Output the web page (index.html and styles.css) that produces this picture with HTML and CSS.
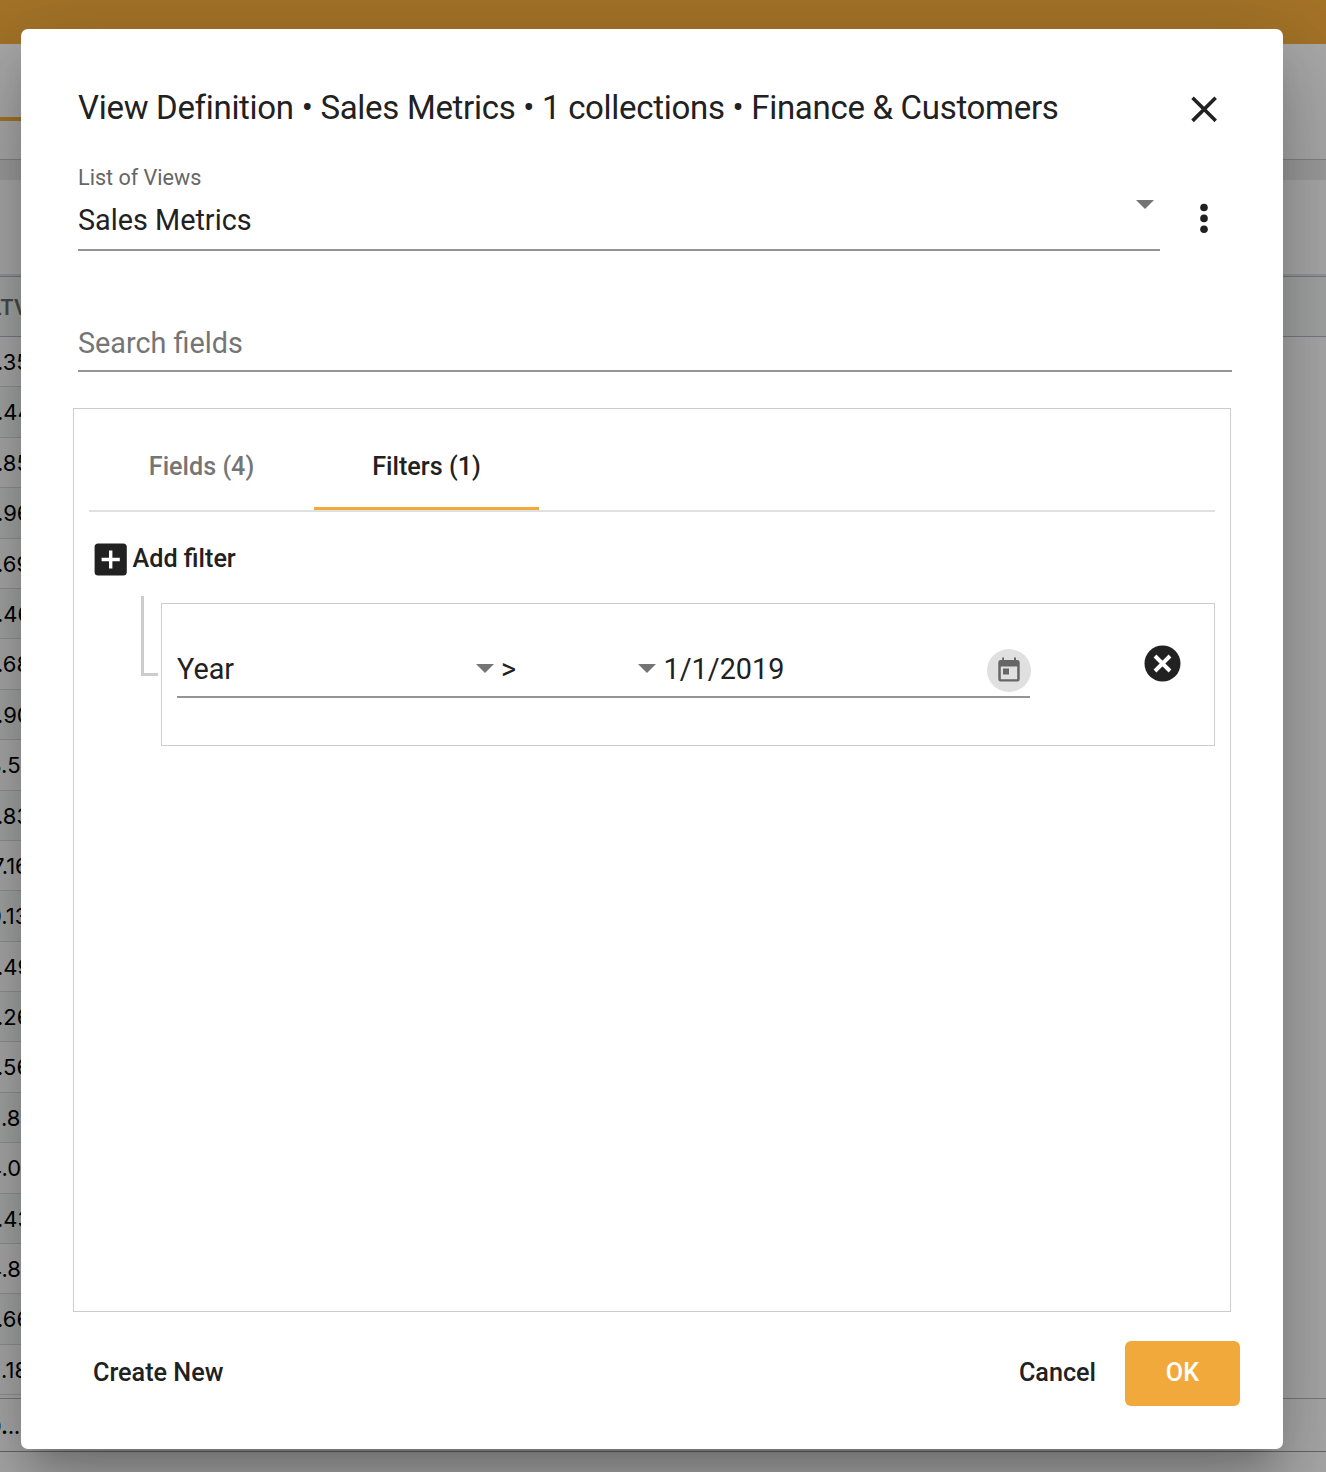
FILE: index.html
```html
<!DOCTYPE html>
<html lang="en">
<head>
<meta charset="utf-8">
<title>View Definition</title>
<link rel="stylesheet" href="styles.css">
</head>
<body>
<div class="page">
  <div class="topbar"></div>
  <div class="tabstrip"><div class="tabstrip-active"></div></div>
  <div class="divider"></div>
  <div class="toolbar"></div>
  <div class="grid-head">LTV</div>
  <div class="grid-body">
    <div class="row">.35</div>
    <div class="row">.44</div>
    <div class="row">.85</div>
    <div class="row">.96</div>
    <div class="row">.69</div>
    <div class="row">.46</div>
    <div class="row">.68</div>
    <div class="row">.90</div>
    <div class="row lead">8.5</div>
    <div class="row">.83</div>
    <div class="row lead seven">7.16</div>
    <div class="row lead">0.13</div>
    <div class="row">.49</div>
    <div class="row">.26</div>
    <div class="row">.56</div>
    <div class="row short">.8</div>
    <div class="row lead">4.0</div>
    <div class="row">.43</div>
    <div class="row lead">4.8</div>
    <div class="row">.66</div>
    <div class="row short">.18</div>
  </div>
  <div class="grid-foot">0.<span class="dots">....</span></div>
</div>

<div class="overlay">
  <section class="dialog" role="dialog" aria-modal="true">
    <header class="dialog-head">
      <h1 class="title">View Definition • Sales Metrics • 1 collections • Finance &amp; Customers</h1>
      <svg class="icon-close" viewBox="0 0 50 50"><path d="M14.8 15 35.4 35.6M35.4 15 14.8 35.6" stroke="#212121" stroke-width="3.6" stroke-linecap="square" fill="none"/></svg>
    </header>

    <div class="views">
      <div class="select">
        <div class="label">List of Views</div>
        <div class="select-value"><span>Sales Metrics</span><i class="caret"></i></div>
      </div>
      <svg class="icon-more" viewBox="0 0 44 44"><g fill="#212121"><circle cx="22" cy="11.5" r="3.8"/><circle cx="22" cy="22.4" r="3.8"/><circle cx="22" cy="33.2" r="3.8"/></g></svg>
    </div>

    <div class="search">Search fields</div>

    <div class="panel">
      <nav class="tabs">
        <div class="tab">Fields (4)</div>
        <div class="tab active">Filters (1)</div>
      </nav>
      <div class="add">
        <svg class="icon-add" viewBox="0 0 33 33"><rect x=".6" y=".4" width="32.2" height="32.2" rx="3.6" fill="#212121"/><path d="M16.7 7.4V25.6M7.6 16.5H25.8" stroke="#fff" stroke-width="3.4"/></svg>
        <span>Add filter</span>
      </div>
      <div class="filter">
        <div class="branch"></div>
        <div class="card">
          <div class="condition">
            <div class="field-name"><span>Year</span><i class="caret"></i></div>
            <div class="field-op"><span class="op">&gt;</span><i class="caret"></i></div>
            <div class="field-date">1/1/2019</div>
            <div class="date-button">
              <svg viewBox="0 0 22 25" width="22" height="25"><path fill="#666" fill-rule="evenodd" d="M4.2 0.5H6V3H16V.5H18V3H19.3Q21.7 3 21.7 5.4V22.2Q21.7 24.6 19.3 24.6H2.7Q.3 24.6.3 22.2V5.4Q.3 3 2.7 3H4.2ZM2.8 9.4V22.2H19.2V9.4ZM5 11.6H11V17.6H5Z"/></svg>
            </div>
          </div>
          <svg class="icon-remove" viewBox="0 0 37 37"><circle cx="18.5" cy="18.5" r="18" fill="#212121"/><path d="M11 11 26 26M26 11 11 26" stroke="#fff" stroke-width="3.9" stroke-linecap="butt"/></svg>
        </div>
      </div>
    </div>

    <footer class="actions">
      <div class="btn-text">Create New</div>
      <div class="btn-text cancel">Cancel</div>
      <div class="btn-ok">OK</div>
    </footer>
  </section>
</div>
</body>
</html>
```
FILE: styles.css
```css
* { box-sizing: border-box; }
body {
  margin: 0;
  width: 1326px;
  height: 1472px;
  overflow: hidden;
  position: relative;
  font-family: Roboto, "Liberation Sans", sans-serif;
  color: #212121;
}

/* Underlying page */
.page { height: 1472px; background: #fafafa; font-family: Inter, sans-serif; }
.topbar { height: 44px; background: #f2aa3b; }
.tabstrip { height: 116px; padding-top: 73px; border-bottom: 1px solid #c2c2c2; }
.tabstrip-active { width: 60px; height: 4px; background: #f2aa3b; }
.divider { height: 20px; background: #e6e6e6; }
.toolbar { height: 96px; border-bottom: 2px solid #ddd; box-shadow: 0 1px #b3b6bd; }
.grid-head {
  height: 60px;
  margin-top: 1px;
  border-bottom: 1px solid #b3b6bd;
  background: #f0f4f2;
  font-size: 21px;
  line-height: 61px;
  text-indent: -10px;
  color: #6c6e6d;
  font-weight: 600;
}
.grid-body { width: 1200px; height: 1058.4px; }
.row {
  height: 50.4px;
  border-bottom: 1px solid #d5d8d7;
  font-size: 22px;
  line-height: 51px;
  text-indent: -3px;
  color: #000;
}
.row:nth-child(even) { background: #f0f4f2; }
.row.lead { text-indent: -12px; }
.row.seven { text-indent: -8px; }
.row.short { text-indent: 1px; }
.grid-foot {
  height: 54px;
  margin-top: 3px;
  border-top: 1px solid #b4b4b4;
  border-bottom: 1px solid #999;
  font-size: 22px;
  font-weight: 600;
  line-height: 55px;
  text-indent: -13px;
  color: #000;
}
.dots { font-size: 19px; }

/* Dialog */
.overlay {
  position: absolute;
  inset: 0;
  padding: 29px 43px 23px 21px;
  background: rgba(0, 0, 0, .32);
}
.dialog {
  height: 1420px;
  padding: 55px 43px 0 52px;
  border-radius: 7px;
  background: #fff;
  box-shadow: 0 22px 30px -14px rgba(0, 0, 0, .2), 0 48px 76px 6px rgba(0, 0, 0, .14), 0 18px 92px 16px rgba(0, 0, 0, .12);
}
.dialog-head {
  display: flex;
  justify-content: space-between;
  height: 77px;
  padding: 0 11px 0 5px;
}
.title {
  margin: 0;
  font-size: 33px;
  font-weight: 400;
  line-height: 48px;
  letter-spacing: -.3px;
  white-space: nowrap;
}
.icon-close { width: 50px; height: 50px; }

.views { display: flex; height: 90px; padding-left: 5px; }
.select { width: 1082px; border-bottom: 2px solid #949494; }
.label { font-size: 21.6px; line-height: 34px; color: #666; }
.select-value { display: flex; justify-content: space-between; padding-right: 6px; font-size: 28.8px; line-height: 51px; }
.caret { width: 18px; height: 9px; background: #757575; clip-path: polygon(0 0, 100% 0, 50% 100%); }
.select .caret { margin-top: 5px; }
.icon-more { width: 44px; height: 44px; margin: 35px 0 0 22px; }

.search {
  width: 1154px;
  height: 121px;
  margin-left: 5px;
  padding-top: 63px;
  border-bottom: 2px solid #949494;
  font-size: 28.8px;
  line-height: 58px;
  color: #757575;
}

.panel {
  width: 1158px;
  height: 904px;
  margin-top: 36px;
  padding: 15px;
  border: 1px solid #ccc;
}
.tabs { display: flex; height: 88px; border-bottom: 2px solid #e0e0e0; }
.tab {
  width: 225px;
  height: 86px;
  border-bottom: 3px solid transparent;
  font-size: 25.2px;
  font-weight: 500;
  line-height: 86px;
  text-align: center;
  color: #757575;
}
.tab.active { border-color: #f2a93b; color: #212121; }
.add {
  display: flex;
  height: 84px;
  padding: 31px 0 0 5px;
  font-size: 25.2px;
  font-weight: 500;
  line-height: 31px;
}
.icon-add { width: 33px; height: 33px; margin-right: 5.5px; }
.filter { display: flex; padding-left: 52px; }
.branch { width: 17px; height: 80px; border-left: 3px solid #ccc; border-bottom: 3px solid #ccc; }
.card {
  display: flex;
  width: 1054px;
  height: 143px;
  margin: 7px 0 0 3px;
  padding: 0 15px;
  border: 1px solid #ccc;
}
.condition {
  display: flex;
  width: 853px;
  height: 94px;
  padding-top: 36px;
  border-bottom: 2px solid #949494;
  font-size: 28.8px;
  line-height: 58px;
}
.condition .caret { margin-top: 24px; }
.field-name { display: flex; justify-content: space-between; width: 317px; }
.field-op { display: flex; justify-content: space-between; width: 162px; padding-left: 7px; }
.field-date { flex: none; width: 331px; padding-left: 7.5px; }
.date-button {
  display: flex;
  flex: none;
  align-items: center;
  justify-content: center;
  width: 44px;
  height: 43px;
  margin: 9px -1px 0 0;
  border-radius: 50%;
  background: #e0e0e0;
}
.date-button svg { margin-top: -2px; }
.icon-remove { width: 37px; height: 37px; margin: 41px 0 0 114px; }

.actions { display: flex; padding-top: 29px; font-size: 25.2px; font-weight: 500; line-height: 63px; }
.btn-text { padding-left: 20px; }
.cancel { margin-left: auto; padding: 0 29px 0 0; }
.btn-ok { width: 115px; height: 65px; border-radius: 6px; background: #f2a93b; text-align: center; color: #fff; }
```
